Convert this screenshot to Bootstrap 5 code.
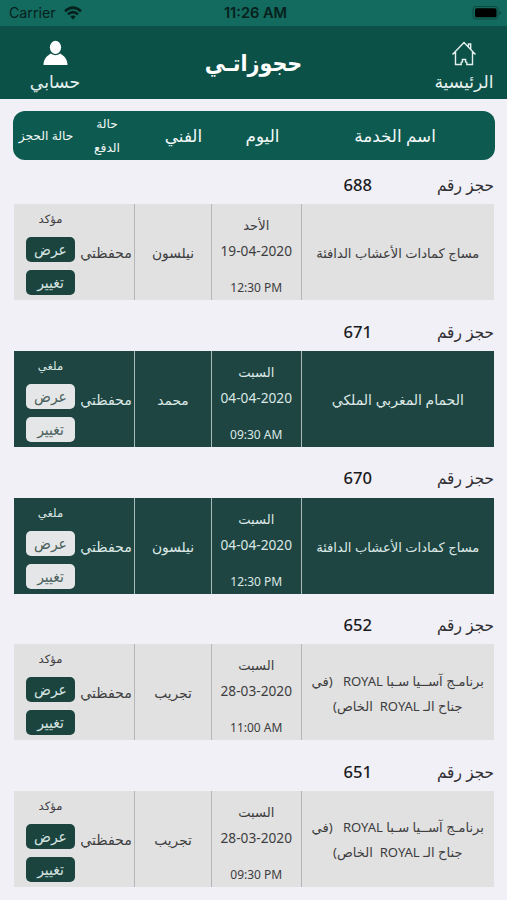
<!DOCTYPE html>
<html lang="ar" dir="rtl">
<head>
<meta charset="utf-8">
<meta name="viewport" content="width=device-width, initial-scale=1">
<title>حجوزاتي</title>
<link rel="stylesheet" href="https://cdn.jsdelivr.net/npm/bootstrap@5.3.0/dist/css/bootstrap.min.css">
<style>
body{background:#f1f0f6;color:#3d3d40;font-family:"Noto Sans","DejaVu Sans",sans-serif;height:900px;overflow:hidden}
.narrow{font-family:"Noto Sans","DejaVu Sans Condensed",sans-serif}
.status-bar{height:26px;background:#136a5e;color:#06201c;font:14.2px/26px Inter,sans-serif;padding:0 5px 0 9px}
.status-bar>*{flex:1}
.clock{font-weight:600;font-size:14.6px}
.top-bar{height:72.5px;background:#0c5148;color:#fff;padding:0 13px 0 25px}
.top-bar .tab{width:60px;color:#e4f0ee;text-decoration:none;font-size:17.2px;line-height:24px;padding-top:14px;white-space:nowrap}
.top-bar .tab span{margin-top:2px}
.top-bar h1{font-size:23px;font-weight:700;line-height:72px;margin-right:12px}
.cols{display:grid;grid-template-columns:193.5px 89.5px 77px 56px 64px}
.head-row{height:49px;margin:12.5px 12px 0 13px;border-radius:12px;background:#0d5b50;color:#f2f8f7;font-size:16.8px;line-height:24px;white-space:nowrap;grid-template-columns:200px 65px 93px 60px 62px}
.head-row .small-head{font-size:12.3px;padding-top:1px}
.booking{height:146.65px;padding:0 13px 0 14px}
.number-row{height:44.3px;font-size:17px;line-height:49px;color:#2f2f33}
.number-row b{font-weight:500;color:#1b1b1e;font-size:16.6px;margin-right:65px}
.number-row .caption{width:57px;white-space:nowrap}
.panel{height:96px;grid-template-rows:96px;background:#e1e1e1;font-size:13.1px;white-space:nowrap;--rule:#b4b5b7;--chip:#1c443f;--ink:#d5e3e0}
.panel.cancelled{background:#1e4541;color:#dce8e6;--rule:#a9bbb8;--chip:#e5e6e7;--ink:#4b625e}
.panel .ruled{border-left:1.6px solid var(--rule)}
.service,.tech,.pay{line-height:25px;padding-top:1px}
.service{padding-top:3px}
.service.short{font-size:14px;padding-top:1px}
.tech,.pay{font-size:14.2px}
.tech{font-size:13.8px}
.day{line-height:25px;padding-top:9px}
.day span:nth-child(2){font-size:13.7px}
.day span:nth-child(3){font-size:12px;padding-top:12px}
.state{font-size:11.6px;line-height:20px;padding:5px 3px 0 12px}
.chip-btn{flex:none;height:25px;width:49px;padding:0;border:0;border-radius:5px;background:var(--chip);color:var(--ink);font-size:15.5px;line-height:25px;margin-bottom:8px}
</style>
<script src="https://cdn.jsdelivr.net/npm/bootstrap@5.3.0/dist/js/bootstrap.bundle.min.js"></script>
</head>
<body>
<div class="status-bar d-flex align-items-center" dir="ltr">
  <div class="d-flex align-items-center gap-2"><span>Carrier</span>
    <svg width="18" height="14" viewBox="0 0 18 14" fill="none" stroke="#06201c" stroke-width="2.5"><path d="M1 5.2Q9-2 17 5.2M4 8.3Q9 4 14 8.3"/><path d="M6.3 10.5Q9 8.3 11.7 10.5L9 13.4z" fill="#06201c" stroke="none"/></svg></div>
  <div class="clock text-center">11:26 AM</div>
  <div class="d-flex justify-content-end"><svg width="30" height="14" viewBox="0 0 30 14"><rect x="1" y=".5" width="25" height="12.5" rx="3" fill="none" stroke="#0d493f"/><rect x="3" y="2.2" width="21.5" height="9" rx="1.5"/><path d="M27.3 5v4q1.6-.6 1.6-2t-1.6-2" fill="#0d493f"/></svg></div>
</div>
<nav class="top-bar d-flex justify-content-between">
  <a href="#" class="tab d-flex flex-column align-items-center"><svg width="26" height="28" viewBox="0 0 26 28" fill="none" stroke="#e4f0ee" stroke-width="1.4"><path d="M1.5 14.5 13 2.5 24.5 14.5M4.5 12v12.5h5.7v-2l1.2-.6v-2.4h3.2v2.4l1.2.6v2h5.7V12M17.5 6.5V4h2.2v5"/></svg><span>الرئيسية</span></a>
  <h1 class="mb-0 narrow">حجوزاتـي</h1>
  <a href="#" class="tab d-flex flex-column align-items-center"><svg width="26" height="28" viewBox="0 0 26 28" fill="#fff"><ellipse cx="13.5" cy="7.3" rx="5.6" ry="6.6"/><path d="M1.5 25C1.6 19 5 16 8.8 13.6Q13.5 17 18.2 13.6C22 16 25.4 19 25.5 25z"/></svg><span>حسابي</span></a>
</nav>
<div class="head-row cols align-items-center text-center">
  <div>اسم الخدمة</div><div>اليوم</div><div>الفني</div><div class="small-head">حالة<br>الدفع</div><div class="small-head">حالة الحجز</div>
</div>
<main id="bookings"></main>
<script>
const massage = 'مساج كمادات الأعشاب الدافئة';
const hammam = 'الحمام المغربي الملكي';
const royal = 'برنامـج آســيا سـبا ROYAL &nbsp; (في<br>جناح الـ ROYAL &nbsp;الخاص)';
const bookings = [
  [688, massage, 'الأحد', '19-04-2020', '12:30 PM', 'نيلسون', 'مؤكد'],
  [671, hammam, 'السبت', '04-04-2020', '09:30 AM', 'محمد', 'ملغي'],
  [670, massage, 'السبت', '04-04-2020', '12:30 PM', 'نيلسون', 'ملغي'],
  [652, royal, 'السبت', '28-03-2020', '11:00 AM', 'تجريب', 'مؤكد'],
  [651, royal, 'السبت', '28-03-2020', '09:30 PM', 'تجريب', 'مؤكد']
];
document.getElementById('bookings').innerHTML = bookings.map(([id, service, day, date, time, tech, state]) => `
<section class="booking">
  <div class="number-row d-flex"><span class="caption narrow">حجز رقم</span><b>${id}</b></div>
  <div class="panel cols text-center ${state === 'ملغي' ? 'cancelled' : ''}">
    <div class="service ruled d-flex align-items-center justify-content-center ${service === hammam ? 'short' : ''}"><span>${service}</span></div>
    <div class="day ruled d-flex flex-column"><span>${day}</span><span dir="ltr">${date}</span><span dir="ltr">${time}</span></div>
    <div class="tech ruled d-flex align-items-center justify-content-center">${tech}</div>
    <div class="pay d-flex align-items-center justify-content-center">محفظتي</div>
    <div class="state d-flex flex-column align-items-center"><span class="mb-2">${state}</span><button class="btn chip-btn narrow">عرض</button><button class="btn chip-btn narrow">تغيير</button></div>
  </div>
</section>`).join('');
</script>
</body>
</html>
